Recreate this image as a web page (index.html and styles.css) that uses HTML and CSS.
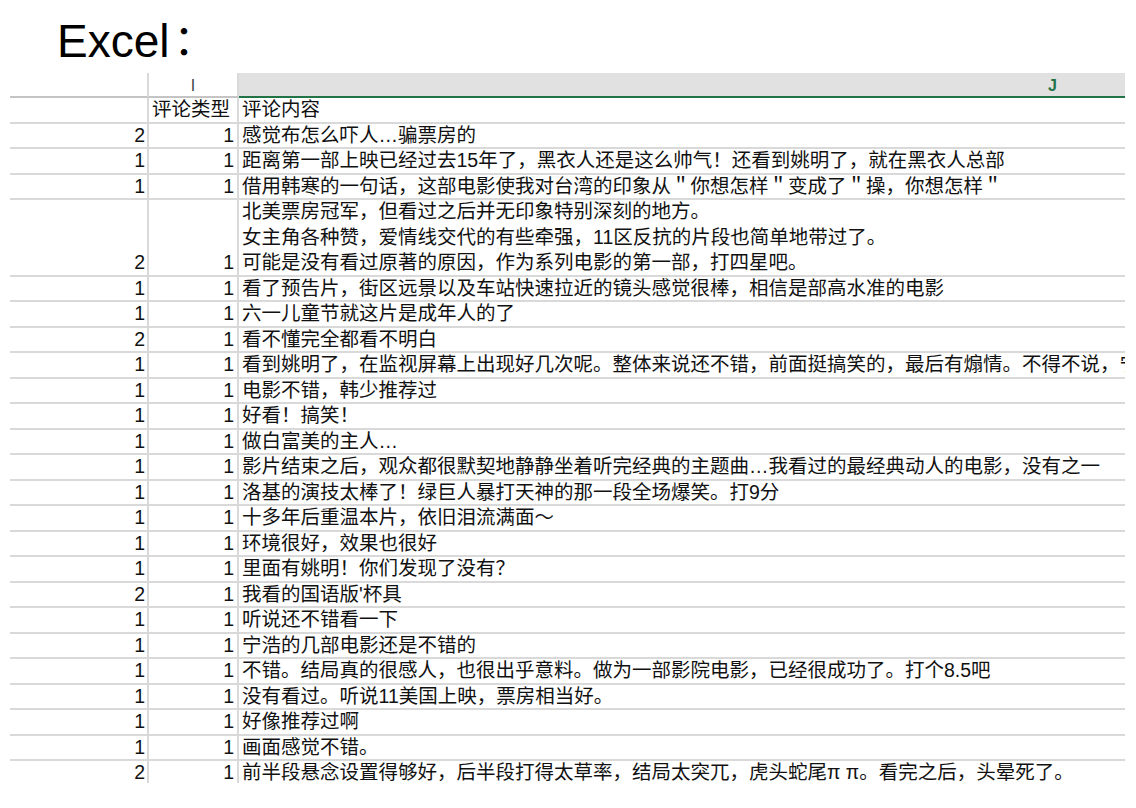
FILE: index.html
```html
<!DOCTYPE html>
<html lang="zh-CN">
<head>
<meta charset="utf-8">
<title>Excel</title>
<link rel="stylesheet" href="styles.css">
</head>
<body>
<div class="page">
  <h1 class="title">Excel<span class="colon">：</span></h1>
  <div class="sheet">
    <div class="row head">
      <div class="cell c-h"></div>
      <div class="cell c-i colname">I</div>
      <div class="cell c-j colname sel">J</div>
    </div>
    <div class="row"><div class="cell c-h"></div><div class="cell c-i txt">评论类型</div><div class="cell c-j">评论内容</div></div>
    <div class="row"><div class="cell c-h">2</div><div class="cell c-i">1</div><div class="cell c-j">感觉布怎么吓人…骗票房的</div></div>
    <div class="row"><div class="cell c-h">1</div><div class="cell c-i">1</div><div class="cell c-j">距离第一部上映已经过去15年了，黑衣人还是这么帅气！还看到姚明了，就在黑衣人总部</div></div>
    <div class="row"><div class="cell c-h">1</div><div class="cell c-i">1</div><div class="cell c-j">借用韩寒的一句话，这部电影使我对台湾的印象从＂你想怎样＂变成了＂操，你想怎样＂</div></div>
    <div class="row tall"><div class="cell c-h">2</div><div class="cell c-i">1</div><div class="cell c-j"><div class="line">北美票房冠军，但看过之后并无印象特别深刻的地方。</div><div class="line">女主角各种赞，爱情线交代的有些牵强，11区反抗的片段也简单地带过了。</div><div class="line">可能是没有看过原著的原因，作为系列电影的第一部，打四星吧。</div></div></div>
    <div class="row"><div class="cell c-h">1</div><div class="cell c-i">1</div><div class="cell c-j">看了预告片，街区远景以及车站快速拉近的镜头感觉很棒，相信是部高水准的电影</div></div>
    <div class="row"><div class="cell c-h">1</div><div class="cell c-i">1</div><div class="cell c-j">六一儿童节就这片是成年人的了</div></div>
    <div class="row"><div class="cell c-h">2</div><div class="cell c-i">1</div><div class="cell c-j">看不懂完全都看不明白</div></div>
    <div class="row"><div class="cell c-h">1</div><div class="cell c-i">1</div><div class="cell c-j">看到姚明了，在监视屏幕上出现好几次呢。整体来说还不错，前面挺搞笑的，最后有煽情。不得不说，宁浩的电影</div></div>
    <div class="row"><div class="cell c-h">1</div><div class="cell c-i">1</div><div class="cell c-j">电影不错，韩少推荐过</div></div>
    <div class="row"><div class="cell c-h">1</div><div class="cell c-i">1</div><div class="cell c-j">好看！搞笑！</div></div>
    <div class="row"><div class="cell c-h">1</div><div class="cell c-i">1</div><div class="cell c-j">做白富美的主人…</div></div>
    <div class="row"><div class="cell c-h">1</div><div class="cell c-i">1</div><div class="cell c-j">影片结束之后，观众都很默契地静静坐着听完经典的主题曲…我看过的最经典动人的电影，没有之一</div></div>
    <div class="row"><div class="cell c-h">1</div><div class="cell c-i">1</div><div class="cell c-j">洛基的演技太棒了！绿巨人暴打天神的那一段全场爆笑。打9分</div></div>
    <div class="row"><div class="cell c-h">1</div><div class="cell c-i">1</div><div class="cell c-j">十多年后重温本片，依旧泪流满面～</div></div>
    <div class="row"><div class="cell c-h">1</div><div class="cell c-i">1</div><div class="cell c-j">环境很好，效果也很好</div></div>
    <div class="row"><div class="cell c-h">1</div><div class="cell c-i">1</div><div class="cell c-j">里面有姚明！你们发现了没有？</div></div>
    <div class="row"><div class="cell c-h">2</div><div class="cell c-i">1</div><div class="cell c-j">我看的国语版'杯具</div></div>
    <div class="row"><div class="cell c-h">1</div><div class="cell c-i">1</div><div class="cell c-j">听说还不错看一下</div></div>
    <div class="row"><div class="cell c-h">1</div><div class="cell c-i">1</div><div class="cell c-j">宁浩的几部电影还是不错的</div></div>
    <div class="row"><div class="cell c-h">1</div><div class="cell c-i">1</div><div class="cell c-j">不错。结局真的很感人，也很出乎意料。做为一部影院电影，已经很成功了。打个8.5吧</div></div>
    <div class="row"><div class="cell c-h">1</div><div class="cell c-i">1</div><div class="cell c-j">没有看过。听说11美国上映，票房相当好。</div></div>
    <div class="row"><div class="cell c-h">1</div><div class="cell c-i">1</div><div class="cell c-j">好像推荐过啊</div></div>
    <div class="row"><div class="cell c-h">1</div><div class="cell c-i">1</div><div class="cell c-j">画面感觉不错。</div></div>
    <div class="row"><div class="cell c-h">2</div><div class="cell c-i">1</div><div class="cell c-j">前半段悬念设置得够好，后半段打得太草率，结局太突兀，虎头蛇尾π π。看完之后，头晕死了。</div></div>
  </div>
</div>
</body>
</html>
```

FILE: styles.css
```css
html, body {
  margin: 0;
  padding: 0;
  background: #ffffff;
}

body {
  font-family: "Liberation Sans", "Noto Sans CJK SC", sans-serif;
  color: #111111;
}

.page {
  width: 1136px;
  height: 808px;
  overflow: hidden;
}

.title {
  margin: 0;
  height: 73px;
  box-sizing: border-box;
  padding: 15px 0 0 57px;
  font-size: 46px;
  line-height: 52px;
  font-weight: normal;
  color: #000000;
}

.title .colon {
  margin-left: 4px;
  font-family: "Noto Sans CJK SC", sans-serif;
  font-size: 42px;
  line-height: 0;
  vertical-align: 2px;
}

.sheet {
  margin-left: 10px;
  width: 1115px;
  height: 710px;
  overflow: hidden;
}

.row {
  display: grid;
  grid-template-columns: 139px 90px 886px;
  height: 25.5px;
  box-sizing: border-box;
  border-bottom: 2px solid #d9d9d9;
}

.row.tall {
  height: 76.5px;
}

.cell {
  box-sizing: border-box;
  border-right: 2px solid #d9d9d9;
  overflow: hidden;
  white-space: nowrap;
  font-size: 19.5px;
  line-height: 23.5px;
}

.c-h {
  text-align: right;
  padding-right: 2px;
}

.c-i {
  text-align: right;
  padding-right: 3px;
}

.c-i.txt {
  text-align: left;
  padding-left: 3px;
  padding-right: 0;
}

.c-j {
  border-right: none;
  padding-left: 3px;
}

.row.tall .c-h,
.row.tall .c-i {
  padding-top: 51px;
}

.row.tall .line {
  height: 25.5px;
  line-height: 23.5px;
}

/* column header row */
.row.head {
  height: 25px;
  border-bottom: none;
}

.row.head .cell {
  border-bottom: 2px solid #c4c4c4;
  font-size: 16px;
  line-height: 21px;
  padding-top: 2px;
  color: #444444;
}

.row.head .colname {
  text-align: center;
  padding-right: 0;
}

.row.head .sel {
  background: #e1e1e1;
  border-bottom: 2px solid #217346;
  color: #217346;
  font-weight: bold;
  text-align: left;
  padding-left: 809px;
}
```
